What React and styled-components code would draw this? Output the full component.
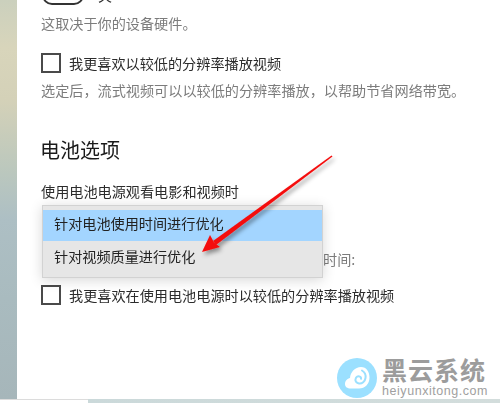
import React from "react";
import styled, { createGlobalStyle } from "styled-components";

const Global = createGlobalStyle`
  html, body { margin: 0; padding: 0; background: #fff; }
  body { font-family: "Noto Sans CJK SC", "Liberation Sans", sans-serif; }
`;
const Page = styled.div`
  position: relative; width: 500px; height: 403px; overflow: hidden;
  display: flex; flex-direction: column; background: #fff;
`;
const Top = styled.div`display: flex; height: 399px;`;
const Sidebar = styled.div`
  width: 17px; flex: none;
  background: linear-gradient(180deg, #cbd0bd 0%, #d8d5bb 12%, #d4d1b8 25%, #bcc8bd 42%, #adbfc4 55%, #a9bbbf 75%, #a6b6ba 100%);
`;
const Content = styled.div`
  flex: 1; padding-left: 24px; display: flex; flex-direction: column;
  filter: blur(0.35px);
`;
const ToggleRow = styled.div`display: flex; align-items: flex-end; gap: 14px; height: 5px;`;
const Toggle = styled.div`
  width: 42px; height: 20px; box-sizing: border-box; flex: none;
  border: 2px solid #333; border-radius: 10px; margin-left: 1px;
`;
const ToggleLabel = styled.span`font-size: 14px; line-height: 20px; color: #333;`;
const Note = styled.div`
  font-size: 14.15px; line-height: 20px; color: #7c7c7c; white-space: nowrap;
  margin-top: ${p => p.$top}px;
`;
const CheckRow = styled.label`
  display: flex; align-items: center; gap: 8px; height: 20px; margin-top: ${p => p.$top}px;
`;
const Box = styled.span`
  width: 20px; height: 20px; box-sizing: border-box; flex: none;
  border: 2px solid #4a4a4a; background: #fff;
`;
const CheckText = styled.span`font-size: 14.15px; color: #2c2c2c; white-space: nowrap;`;
const Heading = styled.h2`
  margin: 36px 0 0 -1px; font-size: 20px; line-height: 28px; font-weight: 400; color: #1a1a1a;
`;
const FieldLabel = styled.div`
  font-size: 14.15px; line-height: 20px; color: #2c2c2c; margin-top: 17px;
`;
const BottomBar = styled.div`display: flex; height: 4px; flex: none;`;
const BarLeft = styled.div`width: 88px; background: #fff; border-top: 1px solid #dcdcdc; box-sizing: border-box;`;
const BarRight = styled.div`flex: 1; background: linear-gradient(90deg, #cbd9da, #d3dddc);`;

const Menu = styled.div`
  position: absolute; left: 42px; top: 205px; width: 281px; height: 73px; box-sizing: border-box;
  padding: 4px 0 0; background: #e6e6e6; border: 1px solid #d2d2d2;
  box-shadow: 0 2px 12px rgba(0,0,0,.16); filter: blur(0.3px);
`;
const MenuItem = styled.div`
  height: 31px; line-height: ${p => p.$line}px; padding-left: 11px;
  font-size: 14.15px; color: #222;
  background: ${p => (p.$selected ? "#a3d5ff" : "transparent")};
`;
const HiddenText = styled.div`
  position: absolute; left: 323px; top: 249px; font-size: 14.15px; line-height: 20px; color: #7c7c7c;
  filter: blur(0.35px);
`;
const Arrow = styled.svg`position: absolute; left: 0; top: 0; pointer-events: none;`;
const Watermark = styled.div`
  position: absolute; left: 337px; top: 358px; display: flex; gap: 5px; align-items: flex-start;
`;
const WmText = styled.div`display: flex; flex-direction: column; align-items: flex-start; gap: 3px; margin-top: -1px;`;
const WmTitle = styled.div`
  font-size: 25px; line-height: 24px; font-weight: 700; color: #9c9c9c; letter-spacing: 1px; white-space: nowrap;
`;
const WmSub = styled.div`
  font-family: "Liberation Sans", sans-serif; font-size: 12.5px; line-height: 14px; color: #a0a0a0;
  letter-spacing: .55px; white-space: nowrap;
`;

export default function App() {
  return (
    <Page>
      <Global />
      <Top>
        <Sidebar />
        <Content>
          <ToggleRow><Toggle /><ToggleLabel>关</ToggleLabel></ToggleRow>
          <Note $top={8}>这取决于你的设备硬件。</Note>
          <CheckRow $top={20}><Box /><CheckText>我更喜欢以较低的分辨率播放视频</CheckText></CheckRow>
          <Note $top={7}>选定后，流式视频可以以较低的分辨率播放，以帮助节省网络带宽。</Note>
          <Heading>电池选项</Heading>
          <FieldLabel>使用电池电源观看电影和视频时</FieldLabel>
          <CheckRow $top={84}><Box /><CheckText>我更喜欢在使用电池电源时以较低的分辨率播放视频</CheckText></CheckRow>
        </Content>
      </Top>
      <BottomBar><BarLeft /><BarRight /></BottomBar>
      <HiddenText>时间:</HiddenText>
      <Menu>
        <MenuItem $selected $line={27}>针对电池使用时间进行优化</MenuItem>
        <MenuItem $line={31}>针对视频质量进行优化</MenuItem>
      </Menu>
      <Arrow width="500" height="403" viewBox="0 0 500 403">
        <defs>
          <filter id="s" x="-20%" y="-20%" width="140%" height="140%">
            <feDropShadow dx="2" dy="3" stdDeviation="2" floodColor="#000" floodOpacity=".4" />
          </filter>
        </defs>
        <g filter="url(#s)">
          <path d="M332.500 156.500 L331.500 155.500 L213 241 L216 245 Z" fill="#f40c0c" />
          <path d="M202 252 L210 235 L214 242.500 L220 247 Z" fill="#f40c0c" />
        </g>
      </Arrow>
      <Watermark>
        <svg width="40" height="40" viewBox="0 0 40 40">
          <circle cx="20" cy="20" r="20" fill="#9be0ff" />
          <path d="M8 26c0-3.500 2.500-5.500 5-6 .5-6 5-11 11-11 5.500 0 8.500 5 8.500 10.500 0 6.500-4.500 11-10.500 11h-8.500c-3 0-5.500-1.500-5.500-4.500z" fill="#fff" />
          <path d="M25 12.500c2.500 1.500 4 4.500 3.500 7.500-.5 3.500-3.500 6-6.500 5.500-2.500-.4-4-2.500-3.500-4.500.4-1.800 2-3 3.800-2.600 1.200.3 1.900 1.200 1.700 2.300" fill="none" stroke="#9be0ff" strokeWidth="2" strokeLinecap="round" />
        </svg>
        <WmText>
          <WmTitle>黑云系统</WmTitle>
          <WmSub>heiyunxitong.com</WmSub>
        </WmText>
      </Watermark>
    </Page>
  );
}
